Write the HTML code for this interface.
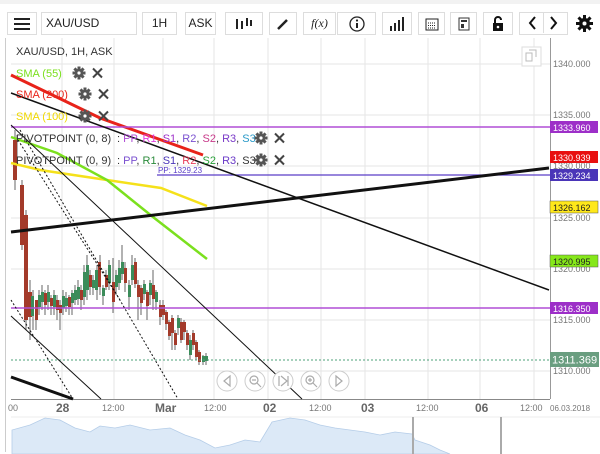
<!DOCTYPE html>
<html><head><style>
body{margin:0;width:600px;height:454px;overflow:hidden;background:#fff;font-family:"Liberation Sans",sans-serif;}
.tb{position:absolute;top:12px;height:23px;border:1px solid #ddd;background:#fff;box-sizing:border-box;font-size:12px;color:#222;text-align:center;line-height:21px;}
</style></head><body>
<div style="position:absolute;left:0;top:0;width:600px;height:4px;background:#f2f2f2"></div>
<div class="tb" style="left:7px;width:30px"><svg width="16" height="12" style="margin-top:5px"><path d="M0 1h16M0 6h16M0 11h16" stroke="#222" stroke-width="2"/></svg></div>
<div class="tb" style="left:41px;width:96px;text-align:left;padding-left:4px">XAU/USD</div>
<div class="tb" style="left:142px;width:35px">1H</div>
<div class="tb" style="left:185px;width:31px">ASK</div>
<div class="tb" style="left:225px;width:38px"><svg width="20" height="14" style="margin-top:4px"><path d="M3 2v10M8 4v8M13 1v8M17 3v6" stroke="#222" stroke-width="2"/></svg></div>
<div class="tb" style="left:269px;width:28px"><svg width="14" height="14" style="margin-top:4px"><path d="M2 12L11 3" stroke="#222" stroke-width="2.5"/></svg></div>
<div class="tb" style="left:303px;width:33px;font-style:italic;font-family:'Liberation Serif',serif">f(x)</div>
<div class="tb" style="left:337px;width:39px"><svg width="16" height="16" style="margin-top:3px"><circle cx="8" cy="8" r="7" fill="none" stroke="#222" stroke-width="1.3"/><path d="M8 7v5" stroke="#222" stroke-width="2"/><circle cx="8" cy="4.5" r="1.1" fill="#222"/></svg></div>
<div class="tb" style="left:382px;width:30px"><svg width="16" height="14" style="margin-top:4px"><path d="M2 14v-5M6 14v-8M10 14v-11M14 14v-14" stroke="#222" stroke-width="2"/></svg></div>
<div class="tb" style="left:418px;width:27px"><svg width="14" height="14" style="margin-top:4px"><rect x="1" y="2" width="12" height="11" fill="none" stroke="#222"/><path d="M3 6h8M3 8.5h8M3 11h8" stroke="#222" stroke-dasharray="1 1"/></svg></div>
<div class="tb" style="left:450px;width:27px"><svg width="12" height="14" style="margin-top:4px"><rect x="1" y="1" width="10" height="12" fill="none" stroke="#333"/><rect x="3" y="3" width="6" height="2" fill="#333"/><rect x="3" y="7" width="3" height="4" fill="#333"/></svg></div>
<div class="tb" style="left:483px;width:30px"><svg width="12" height="16" style="margin-top:3px"><path d="M3 7V4a3 3 0 016 0" fill="none" stroke="#111" stroke-width="2"/><rect x="1" y="7" width="10" height="8" fill="#111"/><circle cx="6" cy="11" r="1.3" fill="#fff"/></svg></div>
<div class="tb" style="left:519px;width:49px"><svg width="47" height="20"><path d="M15 4l-5 6 5 6M31 4l5 6-5 6" fill="none" stroke="#111" stroke-width="2"/><path d="M23.5 0v21" stroke="#ddd"/></svg></div>
<div style="position:absolute;left:576px;top:15px"><svg width="17" height="17"><g fill="#111"><circle cx="8.5" cy="8.5" r="5.5"/><path d="M7 0h3v17h-3zM0 7h17v3H0z"/><path d="M7 0h3v17h-3zM0 7h17v3H0z" transform="rotate(45 8.5 8.5)"/></g><circle cx="8.5" cy="8.5" r="2" fill="#fff"/></svg></div>

<svg style="position:absolute;left:0;top:0" width="600" height="454" font-family="Liberation Sans, sans-serif">
<defs>
<g id="gx">
<g transform="translate(79,73)"><circle r="4.3" fill="#555"/><g fill="#555"><rect x="-1.5" y="-6.5" width="3" height="13"/><rect x="-6.5" y="-1.5" width="13" height="3"/><rect x="-1.5" y="-6.5" width="3" height="13" transform="rotate(45)"/><rect x="-1.5" y="-6.5" width="3" height="13" transform="rotate(-45)"/></g><circle r="1.6" fill="#fff"/></g>
<path d="M93 68.5l9 9M102 68.5l-9 9" stroke="#444" stroke-width="2"/>
</g>
</defs>
<line x1="5.5" y1="38" x2="5.5" y2="452" stroke="#ccc"/>
<g stroke="#e6e6e6">
<line x1="62" y1="38" x2="62" y2="399"/><line x1="114" y1="38" x2="114" y2="399"/><line x1="163" y1="38" x2="163" y2="399"/><line x1="214" y1="38" x2="214" y2="399"/><line x1="268" y1="38" x2="268" y2="399"/><line x1="321" y1="38" x2="321" y2="399"/><line x1="365" y1="38" x2="365" y2="399"/><line x1="428" y1="38" x2="428" y2="399"/><line x1="480" y1="38" x2="480" y2="399"/><line x1="534" y1="38" x2="534" y2="399"/>
<line x1="11" y1="64" x2="550" y2="64"/><line x1="11" y1="115" x2="550" y2="115"/><line x1="11" y1="166" x2="550" y2="166"/><line x1="11" y1="218" x2="550" y2="218"/><line x1="11" y1="269" x2="550" y2="269"/><line x1="11" y1="320" x2="550" y2="320"/><line x1="11" y1="371" x2="550" y2="371"/>
</g>
<line x1="550.5" y1="38" x2="550.5" y2="399" stroke="#999"/>
<line x1="11" y1="399.5" x2="550" y2="399.5" stroke="#888"/>
<g font-size="9" fill="#777">
<text x="553" y="67">1340.000</text><text x="553" y="118">1335.000</text><text x="553" y="169">1330.000</text><text x="553" y="221">1325.000</text><text x="553" y="272">1320.000</text><text x="553" y="323">1315.000</text><text x="553" y="374">1310.000</text>
</g>
<g stroke-width="1">
<path d="M15 130v60M17 135v30M22 180v70M26 210v120M30 280v60M33 290v40M36 300v30M39 290v25M42 285v25M45 290v25M48 285v25M51 295v20M54 290v25M57 295v25M60 300v30M63 290v25M66 292v20M69 295v20M72 290v25M75 285v20M78 280v25M81 285v25M84 265v40M87 255v45M90 270v25M93 275v20M97 265v35M100 255v40M103 285v20M106 270v20M109 260v30M113 258v55M116 270v25M119 260v30M122 245v35M125 262v30M129 280v30M132 255v30M135 258v30M138 280v40M141 285v30M144 280v20M147 290v30M150 280v25M153 270v40M156 290v20M160 300v25M163 300v20M166 310v20M169 320v20M172 315v35M175 330v20M178 315v20M181 318v25M184 320v20M187 330v20M190 335v25M193 330v20M196 340v20M199 350v15M203 355v10M206 353v12" stroke="#666"/>
</g>
<g>
<rect x="13" y="140" width="4" height="40" fill="#a33a2a"/><rect x="20" y="185" width="4" height="60" fill="#a33a2a"/><rect x="24" y="215" width="4" height="105" fill="#a33a2a"/><rect x="28" y="292" width="4" height="25" fill="#a33a2a"/><rect x="31" y="296" width="3" height="20" fill="#3b8c5a"/><rect x="35" y="300" width="3" height="20" fill="#a33a2a"/><rect x="38" y="295" width="3" height="12" fill="#3b8c5a"/><rect x="41" y="292" width="3" height="10" fill="#3b8c5a"/><rect x="44" y="293" width="3" height="12" fill="#a33a2a"/><rect x="47" y="292" width="3" height="10" fill="#3b8c5a"/><rect x="50" y="298" width="3" height="8" fill="#a33a2a"/><rect x="53" y="295" width="3" height="12" fill="#3b8c5a"/><rect x="56" y="300" width="3" height="10" fill="#a33a2a"/><rect x="59" y="305" width="3" height="8" fill="#a33a2a"/><rect x="62" y="296" width="3" height="12" fill="#3b8c5a"/><rect x="65" y="298" width="3" height="8" fill="#3b8c5a"/><rect x="68" y="297" width="3" height="10" fill="#a33a2a"/><rect x="71" y="293" width="3" height="10" fill="#3b8c5a"/><rect x="74" y="290" width="3" height="10" fill="#3b8c5a"/><rect x="77" y="287" width="3" height="12" fill="#3b8c5a"/><rect x="80" y="290" width="3" height="10" fill="#a33a2a"/><rect x="83" y="272" width="3" height="25" fill="#3b8c5a"/><rect x="86" y="265" width="3" height="25" fill="#3b8c5a"/><rect x="89" y="275" width="3" height="12" fill="#a33a2a"/><rect x="92" y="280" width="3" height="8" fill="#3b8c5a"/><rect x="95" y="270" width="3" height="20" fill="#3b8c5a"/><rect x="98" y="262" width="3" height="25" fill="#a33a2a"/><rect x="102" y="288" width="3" height="8" fill="#3b8c5a"/><rect x="105" y="275" width="3" height="12" fill="#a33a2a"/><rect x="108" y="265" width="3" height="18" fill="#3b8c5a"/><rect x="112" y="282" width="3" height="20" fill="#a33a2a"/><rect x="115" y="275" width="3" height="12" fill="#3b8c5a"/><rect x="118" y="268" width="3" height="15" fill="#3b8c5a"/><rect x="121" y="262" width="3" height="12" fill="#3b8c5a"/><rect x="124" y="268" width="3" height="15" fill="#a33a2a"/><rect x="128" y="285" width="3" height="12" fill="#3b8c5a"/><rect x="131" y="265" width="3" height="15" fill="#3b8c5a"/><rect x="134" y="262" width="3" height="22" fill="#a33a2a"/><rect x="137" y="285" width="3" height="12" fill="#a33a2a"/><rect x="140" y="288" width="3" height="15" fill="#a33a2a"/><rect x="143" y="284" width="3" height="10" fill="#3b8c5a"/><rect x="146" y="292" width="3" height="14" fill="#a33a2a"/><rect x="149" y="283" width="3" height="12" fill="#3b8c5a"/><rect x="152" y="285" width="3" height="14" fill="#a33a2a"/><rect x="155" y="292" width="3" height="10" fill="#3b8c5a"/><rect x="159" y="305" width="3" height="12" fill="#a33a2a"/><rect x="162" y="305" width="3" height="10" fill="#a33a2a"/><rect x="165" y="312" width="3" height="12" fill="#a33a2a"/><rect x="168" y="322" width="3" height="14" fill="#a33a2a"/><rect x="171" y="318" width="3" height="15" fill="#a33a2a"/><rect x="174" y="333" width="3" height="12" fill="#a33a2a"/><rect x="177" y="318" width="3" height="10" fill="#3b8c5a"/><rect x="180" y="322" width="3" height="18" fill="#a33a2a"/><rect x="183" y="322" width="3" height="10" fill="#a33a2a"/><rect x="186" y="333" width="3" height="12" fill="#a33a2a"/><rect x="189" y="340" width="3" height="15" fill="#3b8c5a"/><rect x="192" y="333" width="3" height="12" fill="#a33a2a"/><rect x="195" y="342" width="3" height="15" fill="#a33a2a"/><rect x="198" y="352" width="3" height="10" fill="#a33a2a"/><rect x="202" y="356" width="3" height="6" fill="#3b8c5a"/><rect x="205" y="356" width="3" height="5" fill="#3b8c5a"/>
</g>
<polyline points="11,163 40,170 107,180 161,188 207,206" fill="none" stroke="#f5e11a" stroke-width="2.5"/>
<polyline points="11,137 57,153 107,180 153,217 207,259" fill="none" stroke="#7be01e" stroke-width="2.5"/>
<polyline points="11,75 100,118 203,155" fill="none" stroke="#e8231a" stroke-width="3"/>
<line x1="11" y1="127" x2="550" y2="127" stroke="#b04ed6" stroke-width="1.5"/>
<line x1="157" y1="175" x2="550" y2="175" stroke="#5a3ec8" stroke-width="1.3"/>
<text x="158" y="173" font-size="8" fill="#5a3ec8">PP: 1329.23</text>
<line x1="11" y1="308" x2="550" y2="308" stroke="#b04ed6" stroke-width="1.5"/>
<line x1="11" y1="360" x2="550" y2="360" stroke="#4ca07a" stroke-dasharray="2 2"/>
<line x1="11" y1="232" x2="549" y2="168" stroke="#111" stroke-width="3"/>
<line x1="11" y1="93" x2="549" y2="290" stroke="#111" stroke-width="1.5"/>
<line x1="11" y1="125" x2="302" y2="399" stroke="#111" stroke-width="1"/>
<line x1="11" y1="316" x2="101" y2="399" stroke="#111" stroke-width="1"/>
<line x1="11" y1="377" x2="73" y2="399" stroke="#111" stroke-width="3"/>
<line x1="20" y1="130" x2="178" y2="399" stroke="#111" stroke-dasharray="2 2"/>
<line x1="11" y1="300" x2="73" y2="399" stroke="#111" stroke-dasharray="2 2"/>
<line x1="18" y1="140" x2="120" y2="300" stroke="#111" stroke-dasharray="2 2"/>
<rect x="550" y="121" width="48" height="12" fill="#9d2fc8"/><text x="553" y="131" font-size="9" fill="#fff">1333.960</text>
<rect x="550" y="151" width="48" height="12" fill="#e81010"/><text x="553" y="161" font-size="9" fill="#fff">1330.939</text>
<rect x="550" y="169" width="48" height="12" fill="#4a35b8"/><text x="553" y="179" font-size="9" fill="#fff">1329.234</text>
<rect x="550" y="201" width="48" height="12" fill="#ffe81a" stroke="#555" stroke-width=".5"/><text x="553" y="211" font-size="9" fill="#222">1326.162</text>
<rect x="550" y="255" width="48" height="12" fill="#86e81a" stroke="#555" stroke-width=".5"/><text x="553" y="265" font-size="9" fill="#222">1320.995</text>
<rect x="550" y="302" width="48" height="12" fill="#9d2fc8"/><text x="553" y="312" font-size="9" fill="#fff">1316.350</text>
<rect x="550" y="352" width="49" height="15" fill="#6a9e80"/><text x="552" y="363.5" font-size="11" fill="#fff">1311.369</text>
<g font-size="11">
<text x="16" y="55" fill="#333">XAU/USD, 1H, ASK</text>
<text x="16" y="77" fill="#7be01e">SMA (55)</text>
<text x="16" y="98" fill="#e8231a">SMA (200)</text>
<text x="16" y="120" fill="#f0d800">SMA (100)</text>
<text x="16" y="142" fill="#333">PIVOTPOINT (0, 8)</text>
<text x="117" y="142"><tspan fill="#333">: </tspan><tspan fill="#b04ed6">PP</tspan><tspan fill="#333">, </tspan><tspan fill="#e040e0">R1</tspan><tspan fill="#333">, </tspan><tspan fill="#9d2fc8">S1</tspan><tspan fill="#333">, </tspan><tspan fill="#7a50d0">R2</tspan><tspan fill="#333">, </tspan><tspan fill="#c83a8a">S2</tspan><tspan fill="#333">, </tspan><tspan fill="#7a3ac8">R3</tspan><tspan fill="#333">, </tspan><tspan fill="#2a9ac8">S3</tspan></text>
<text x="16" y="164" fill="#333">PIVOTPOINT (0, 9)</text>
<text x="117" y="164"><tspan fill="#333">: </tspan><tspan fill="#7a50d0">PP</tspan><tspan fill="#333">, </tspan><tspan fill="#2a8a3a">R1</tspan><tspan fill="#333">, </tspan><tspan fill="#4a35b8">S1</tspan><tspan fill="#333">, </tspan><tspan fill="#e8405a">R2</tspan><tspan fill="#333">, </tspan><tspan fill="#2aa03a">S2</tspan><tspan fill="#333">, </tspan><tspan fill="#6a3ac8">R3</tspan><tspan fill="#333">, S3</tspan></text>
</g>
<use href="#gx" x="0" y="0"/>
<use href="#gx" x="6" y="21"/>
<use href="#gx" x="6" y="43"/>
<use href="#gx" x="182" y="65"/>
<use href="#gx" x="182" y="87"/>
<rect x="522" y="47" width="19" height="19" fill="#fff" stroke="#ddd"/>
<path d="M526 53h6v8h-6zM529 50h7v7" fill="none" stroke="#bbb"/>
<g fill="#fff" stroke="#ccc">
<circle cx="227" cy="381" r="10"/><circle cx="255" cy="381" r="10"/><circle cx="283" cy="381" r="10"/><circle cx="311" cy="381" r="10"/><circle cx="339" cy="381" r="10"/>
</g>
<g fill="none" stroke="#aaa" stroke-width="1.2">
<path d="M230 376l-6 5 6 5z"/><circle cx="254" cy="380" r="4"/><path d="M257 383l4 4M252 380h4"/><path d="M279 376v10M281 376l6 5-6 5M288 376v10"/><circle cx="310" cy="380" r="4"/><path d="M313 383l4 4M308 380h4M310 378v4"/><path d="M336 376l6 5-6 5z"/>
</g>
<g font-size="10" fill="#777">
<text x="8" y="411" font-size="9">00</text><text x="102" y="411" font-size="9">12:00</text><text x="204" y="411" font-size="9">12:00</text><text x="309" y="411" font-size="9">12:00</text><text x="416" y="411" font-size="9">12:00</text><text x="520" y="411" font-size="9">12:00</text><text x="550" y="411" font-size="8">06.03.2018</text>
</g>
<g font-size="12" font-weight="bold" fill="#666">
<text x="56" y="412">28</text><text x="155" y="412">Mar</text><text x="263" y="412">02</text><text x="361" y="412">03</text><text x="475" y="412">06</text>
</g>
<line x1="11" y1="417" x2="600" y2="417" stroke="#eee"/>
<path d="M12 454V430L30 425 45 418 60 420 75 428 90 432 100 426 115 428 130 425 150 430 170 428 185 435 200 440 215 448 230 445 245 440 260 442 272 422 290 418 305 420 320 425 335 428 350 430 365 432 380 435 395 432 412 434 415 440 430 445 440 450 450 454Z" fill="#dce9f7" stroke="#b5cde8" stroke-width=".8"/>
<line x1="413" y1="417" x2="413" y2="454" stroke="#aaa" stroke-width="2"/>
<line x1="501" y1="417" x2="501" y2="454" stroke="#aaa" stroke-width="2"/>
</svg>
</body></html>
